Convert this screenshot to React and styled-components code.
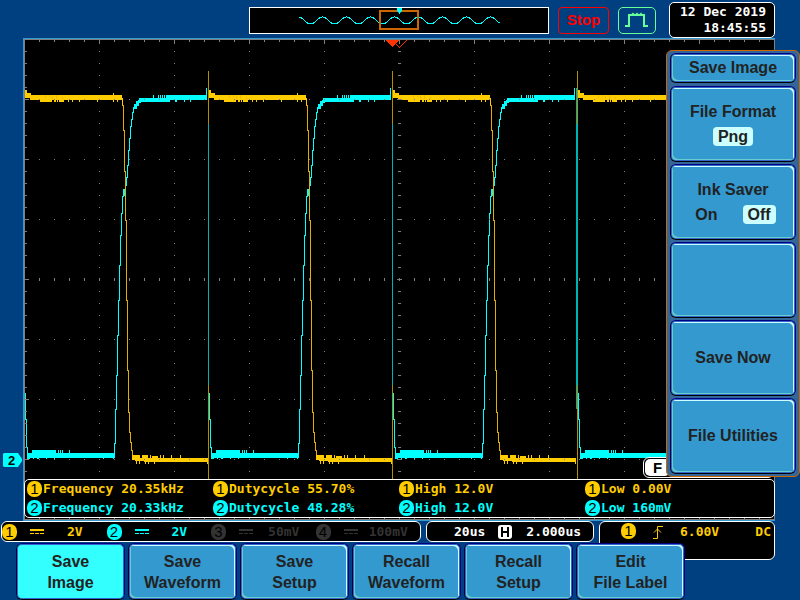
import React from "react";
import styled, { createGlobalStyle, css } from "styled-components";

const c = {
  page: "#004080",
  sky: "#3399cf",
  cyan: "#00ffff",
  yellow: "#ffcc00",
  orange: "#cc6600",
  grid: "#808080",
  off: "#333333",
};

const Global = createGlobalStyle`
  * { box-sizing: border-box; }
  body { margin: 0; background: ${c.page}; }
  button { font: inherit; color: inherit; margin: 0; padding: 0; cursor: pointer; }
`;

const Screen = styled.main`
  display: flex;
  flex-direction: column;
  min-height: 100vh;
  overflow: hidden;
  background: ${c.page};
  color: #222;
  font: bold 16px/21px "Liberation Sans", Arial, sans-serif;
`;

const mono = css`
  font: bold 13px/18px "DejaVu Sans Mono", "Liberation Mono", monospace;
  white-space: pre;
`;

/* ---------- header ---------- */
const Header = styled.header`
  display: flex;
  justify-content: flex-end;
  align-items: center;
  gap: 9px;
  height: 38px;
  padding: 2px 25px 0 0;
`;

const Preview = styled.svg`
  flex: 0 1 300px;
  height: 27px;
  border: 1px solid #fff;
  background: #000;
`;

const StopButton = styled.button`
  width: 51px;
  height: 27px;
  border: 1px solid #f00;
  border-radius: 4px;
  background: transparent;
  && { color: #f00; font-size: 15px; line-height: 23px; padding-bottom: 2px; }
`;

const AcquireButton = styled.button`
  display: flex;
  width: 38px;
  height: 27px;
  margin-right: 4px;
  border: 1px solid #66ff99;
  border-radius: 5px;
  background: transparent;
`;

const Clock = styled.time`
  ${mono}
  width: 106px;
  height: 36px;
  padding: 1px 8px 0 0;
  border: 1px solid #fff;
  border-radius: 5px;
  background: #000;
  color: #fff;
  line-height: 16px;
  text-align: right;
`;

/* ---------- plot ---------- */
const Scope = styled.section`
  position: relative;
  margin: 0 25px 0 23px;
`;

const Plot = styled.svg`
  display: block;
  width: 100%;
  height: 483px;
`;

const LevelTag = styled.svg`
  position: absolute;
  left: -20px;
  top: 415px;
`;

const Measurements = styled.div`
  ${mono}
  position: absolute;
  left: 1px;
  right: 0;
  bottom: 3px;
  display: grid;
  grid-template-columns: repeat(4, 1fr);
  height: 39px;
  padding: 0 3px 0 2px;
  border: 1px solid #fff;
  border-radius: 5px;
  background: #000;
`;

const Measure = styled.div`
  display: flex;
  align-items: center;
  gap: 1px;
  color: ${(p) => p.$color};
`;

const Round = styled.span`
  display: inline-flex;
  flex: none;
  align-items: center;
  justify-content: center;
  width: 15px;
  height: 16px;
  border-radius: 7px;
  background: ${(p) => p.$color};
  color: #000;
  font: 15px/16px "Liberation Sans", Arial, sans-serif;
`;

const FilterStrip = styled.div`
  position: absolute;
  left: 620px;
  right: 1px;
  bottom: 43px;
  height: 21px;
  padding: 1px;
  border: 1px solid #fff;
  border-radius: 6px;
  background: #000;
`;

const FilterMark = styled.span`
  display: block;
  width: 25px;
  height: 17px;
  border-radius: 5px;
  background: #fff;
  color: #000;
  font-size: 15px;
  line-height: 17px;
  text-align: center;
`;

/* ---------- menus ---------- */
const bevel = css`
  border: 1px solid #000080;
  border-left-color: #000033;
  border-bottom-color: #000000;
  border-radius: 6px;
  background: ${c.sky};
  box-shadow: inset 0 0 0 1px #3366cc, inset -2px 2px 0 #ccffff, inset 2px -2px 0 #66cccc;
`;

const SideMenu = styled.aside`
  position: absolute;
  top: 12px;
  right: -25px;
  display: flex;
  flex-direction: column;
  gap: 2px;
  width: 134px;
  padding: 2px 3px;
  border: 1px solid ${c.orange};
  border-radius: 6px;
  background: #336699;
`;

const MenuTitle = styled.h1`
  ${bevel}
  margin: 0 0 1px;
  height: 30px;
  font-size: 16px;
  line-height: 28px;
  text-align: center;
`;

const MenuButton = styled.button`
  ${bevel}
  display: flex;
  flex-direction: column;
  align-items: center;
  justify-content: center;
  gap: 5px;
  height: 76px;
  && { padding-bottom: 2px; }
`;

const Choices = styled.span`
  display: flex;
  justify-content: center;
  gap: 20px;
`;

const Choice = styled.span`
  padding: 0 5px;
  line-height: 19px;
  border-radius: 4px;
  background: ${(p) => (p.$on ? "#ccffff" : "transparent")};
`;

const Tabs = styled.nav`
  position: relative;
  display: grid;
  grid-template-columns: repeat(6, 1fr);
  gap: 3px;
  margin: 1px 115px 0 16px;
`;

const Tab = styled.button`
  ${bevel}
  height: 57px;
  white-space: pre-line;
  line-height: 21px;
  ${(p) => p.$active && "background: #33ffff; box-shadow: inset 0 0 0 1px #3366cc;"}
`;

/* ---------- status ---------- */
const Status = styled.section`
  ${mono}
  display: grid;
  grid-template-columns: 420fr 168fr 176fr;
  gap: 5px;
  height: 21px;
  padding: 0 25px 0 1px;
`;

const Box = styled.div`
  display: flex;
  align-items: center;
  height: 21px;
  min-width: 0;
  border: 1px solid #fff;
  border-radius: 6px;
  background: #000;
  color: #fff;
`;

const TimeBox = styled(Box)`
  gap: 13px;
  padding-left: 27px;
`;

const TriggerBox = styled(Box)`
  align-items: flex-start;
  height: 39px;
  padding: 1px 3px 0 21px;
  gap: 17px;
  color: ${c.yellow};
`;

const Coupling = styled.span`
  margin-left: auto;
`;

const Channel = styled.div`
  display: flex;
  flex: 1;
  align-items: center;
  gap: 13px;
  color: ${(p) => p.$color};
`;

const Value = styled.span`
  flex: 1;
  margin: 0 3px 0 -12px;
  text-align: center;
`;

const DcIcon = () => (
  <svg width="15" height="7" viewBox="0 0 15 7" fill="currentColor" shapeRendering="crispEdges" aria-label="DC">
    <path d="M0 1h14v2H0zM0 5h4v1H0zM5 5h4v1H5zM10 5h4v1h-4z" />
  </svg>
);

const EdgeIcon = () => (
  <svg width="10" height="17" viewBox="0 -2 10 17" fill="none" stroke="currentColor" aria-label="Rising edge">
    <path d="M0 13.500h4.500V1.500H10M1 7.500l3.500-3.500 3.500 3.500" />
  </svg>
);

const HIcon = () => (
  <svg width="15" height="16" viewBox="0 0 15 16" aria-label="Horizontal">
    <rect y="1" width="14" height="14" rx="3" fill="#fff" />
    <path d="M4 3v10M10 3v10M4 8h6" stroke="#000" strokeWidth="2" />
  </svg>
);

const range = (from, to, step) => {
  const out = [];
  for (let v = from; v <= to; v += step) out.push(v);
  return out;
};

const L = 24, R = 774, T = 39, B = 519, CX = 399, CY = 279;

const dot = (x, y, w = 1, h = 1) => `M${x} ${y}h${w}v${h}h${-w}z`;

const gridPath = [
  ...range(L + 75, R - 75, 75).flatMap((x) => range(T + 12, B, 12).map((y) => dot(x, y))),
  ...range(T + 60, B - 60, 60).flatMap((y) => range(L + 15, R, 15).map((x) => dot(x, y))),
  ...range(L + 15, R - 15, 15).flatMap((x) => {
    const n = (x - L) % 75 === 0 ? 4 : 2;
    return [dot(x, T, 1, n + 1), dot(x, B - n, 1, n), dot(x, CY - 1, 1, 3)];
  }),
  ...range(T + 12, B - 12, 12).flatMap((y) => {
    const n = (y - T) % 60 === 0 ? 4 : 2;
    return [dot(L, y, n + 1, 1), dot(R - n, y, n, 1), dot(CX - n / 2, y, n + 1, 1)];
  }),
].join("");

const ticks = (xs, y, h) => xs.map((x) => dot(x, y, 1, h)).join("");

const yellowHigh =
  "M25 90h2v3h4v2h91v5H30v-2h-5zM121 98h2v7h-1v-5h-1zM40 100h12v2H40zM54 100h2v2h-2zM59 100h5v2h-5z" +
  ticks([57, 68, 72, 79, 97, 113, 117], 100, 2) +
  ticks([113], 93, 2);
const yellowFall =
  "M122.500 98V105h1V130h1V171h1V220h1V300h1V370h1V412h1V432h1V442h1V450h1V457h2";
const yellowLow =
  "M132 455h8v3h68v4h-64v-1h-9v-1h-3zM142 455h6v3h-6zM152 456h6v2h-6z" +
  ticks([150, 160, 163, 171, 180], 455, 3) +
  ticks([136, 139, 145, 148, 154, 207], 461, 3);
const cyanLow =
  "M27 453h87v5H30v1h-3zM32 450h24v3H32z" +
  ticks([58, 60, 62, 69], 450, 3) +
  ticks([33, 37, 38, 46, 54, 103, 113], 458, 1);
const cyanRise =
  "M114.500 458V443h1V409h1V375h1V335h1V300h1V265h1V235h1V213h1V196h1V189h1V195h1V185h1V177h1V165h1V150h1V138h1V126h1V119h1V112h1V107h1V104h2V102h2V100h2";
const cyanHigh =
  "M139 98h27v-3h41v5h-37v2h-29v1h-2v3h-2v3h-3v-5h2v-3h3z" +
  "M206 88h1v10h-1z" +
  ticks([153, 158, 160, 162, 164], 95, 3) +
  ticks([175, 176, 184, 190], 100, 2);

const Cycle = ({ shift, part }) => (
  <g transform={`translate(${shift} 0)`}>
    <path d={cyanLow} fill={c.cyan} />
    {!part && (
      <>
        <path d={cyanRise} fill="none" stroke={c.cyan} />
        <path d={cyanHigh} fill={c.cyan} />
      </>
    )}
    <path d="M25.500 393v26h1v28h1v8" fill="none" stroke={c.cyan} />
    {!part && (
      <>
        <path d={yellowFall} fill="none" stroke="#e0b000" />
        <path d={yellowLow} fill={c.yellow} />
      </>
    )}
    {shift > 0 && (
      <>
        <path d="M24 88h1v321h-1z" fill="#00b3b3" />
        <path d="M24 71h1v53h-1zM24 385h1v94h-1z" fill="#b38f00" />
      </>
    )}
    {part && <path d="M23 88h1v321h-1z" fill="#00b3b3" />}
    <path d={yellowHigh} fill={c.yellow} />
    <path d="M45 95h1v3h-1zM49 95h1v2h-1zM52 96h1v3h-1zM56 95h1v4h-1zM62 97h1v2h-1z" fill="#eebb00" />
  </g>
);

const wave = range(0, 200, 1)
  .map((i) => `${i ? "L" : "M"}${49.500 + i} ${(12.5 - 3.5 * Math.cos(((i + 1) / 24) * 2 * Math.PI)).toFixed(1)}`)
  .join("");

const measures = [
  ["Frequency 20.35kHz", "Dutycycle 55.70%", "High 12.0V", "Low 0.00V"],
  ["Frequency 20.33kHz", "Dutycycle 48.28%", "High 12.0V", "Low 160mV"],
];

const channels = [
  ["2V", c.yellow],
  ["2V", c.cyan],
  ["50mV", c.off],
  ["100mV", c.off],
];

const tabs = ["Save\nImage", "Save\nWaveform", "Save\nSetup", "Recall\nWaveform", "Recall\nSetup", "Edit\nFile Label"];

export default function App() {
  return (
    <Screen>
      <Global />
      <Header>
        <Preview viewBox="0 0 298 25" aria-label="Record overview">
          <path d={wave} fill="none" stroke={c.cyan} shapeRendering="crispEdges" />
          <rect x="130" y="3" width="38" height="18" fill="none" stroke={c.orange} strokeWidth="2" />
          <path d="M147 0h5v3l-2 2v1h-1v-1l-2-2z" fill={c.cyan} />
        </Preview>
        <StopButton>Stop</StopButton>
        <AcquireButton aria-label="Acquisition mode">
          <svg width="36" height="25" viewBox="0 0 36 25" fill="none" stroke="#66ff99">
            <path strokeWidth="2" d="M6 18h4V7h1M24 7h1v11h4" />
            <path strokeWidth="2" d="M10 7h3l1-1 1 1h2l1-1 1 1h2l1-1 1 1h2" />
          </svg>
        </AcquireButton>
        <Clock dateTime="2019-12-12T18:45:55">{"12 Dec 2019\n18:45:55"}</Clock>
      </Header>

      <Scope>
        <Plot viewBox="23 38 752 483" preserveAspectRatio="none" shapeRendering="crispEdges" aria-label="Waveforms">
          <rect x="23" y="38" width="753" height="483" fill={c.sky} />
          <rect x="24" y="39" width="751" height="481" fill={c.grid} />
          <rect x="25" y="40" width="749" height="479" fill="#000" />
          <clipPath id="plot-area">
            <rect x="25" y="40" width="749" height="479" />
          </clipPath>
          <g clipPath="url(#plot-area)">
            <Cycle shift={0} />
            <Cycle shift={184} />
            <Cycle shift={368} />
            <Cycle shift={553} part />
          </g>
          <path d={gridPath} fill={c.grid} />
          <path d="M386 40h13l-6 7h-1z" fill="#ff3300" />
          <path d="M396.500 44.500l3 3 7-7" fill="none" stroke="#ff3300" />
        </Plot>
        <LevelTag width="19" height="14" viewBox="0 0 19 14">
          <path d="M1 0h14l4 6v2l-4 6H1l-1-1V1z" fill={c.cyan} />
          <text x="5" y="12" fontFamily="Liberation Sans, Arial, sans-serif" fontSize="13">2</text>
        </LevelTag>
        <FilterStrip>
          <FilterMark>F</FilterMark>
        </FilterStrip>
        <Measurements>
          {measures.map((row, r) =>
            row.map((text, i) => (
              <Measure key={`${r}-${i}`} $color={r ? c.cyan : c.yellow}>
                <Round $color={r ? c.cyan : c.yellow}>{r + 1}</Round>
                {text}
              </Measure>
            ))
          )}
        </Measurements>
        <SideMenu>
          <MenuTitle>Save Image</MenuTitle>
          <MenuButton>
            File Format
            <Choice $on>Png</Choice>
          </MenuButton>
          <MenuButton>
            Ink Saver
            <Choices>
              <Choice>On</Choice>
              <Choice $on>Off</Choice>
            </Choices>
          </MenuButton>
          <MenuButton aria-label="Unassigned" />
          <MenuButton>Save Now</MenuButton>
          <MenuButton>File Utilities</MenuButton>
        </SideMenu>
      </Scope>

      <Status>
        <Box>
          {channels.map(([value, color], i) => (
            <Channel key={i} $color={color}>
              <Round $color={color}>{i + 1}</Round>
              <DcIcon />
              <Value>{value}</Value>
            </Channel>
          ))}
        </Box>
        <TimeBox>
          <span>20us</span>
          <HIcon />
          <span>2.000us</span>
        </TimeBox>
        <TriggerBox>
          <Round $color={c.yellow}>1</Round>
          <EdgeIcon />
          <span>6.00V</span>
          <Coupling>DC</Coupling>
        </TriggerBox>
      </Status>
      <Tabs>
        {tabs.map((t, i) => (
          <Tab key={t} $active={i === 0} aria-pressed={i === 0}>
            {t}
          </Tab>
        ))}
      </Tabs>
    </Screen>
  );
}
